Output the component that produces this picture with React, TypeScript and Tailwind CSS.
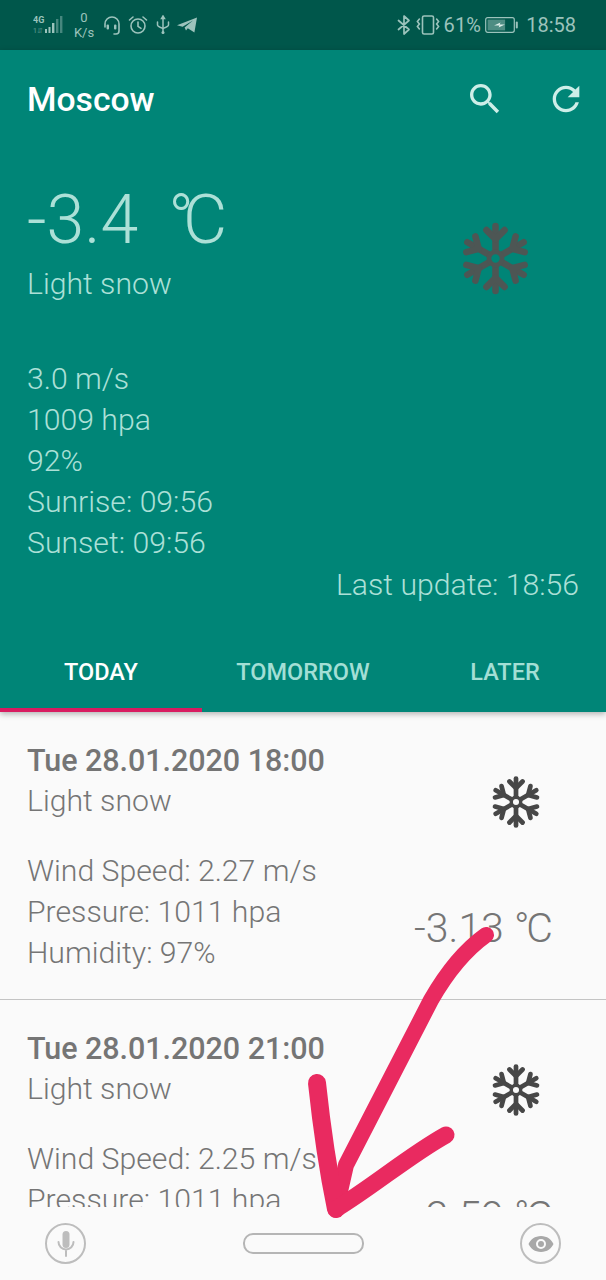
import React from "react";

function Flake({ size, color }: { size: number; color: string }) {
  return (
    <svg width={size} height={size} viewBox="0 0 24 24" fill="none" stroke={color} strokeWidth={2.1} strokeLinecap="round" strokeLinejoin="round">
      {[0, 60, 120, 180, 240, 300].map((a) => (
        <g key={a} transform={`rotate(${a} 12 12)`}>
          <path d="M12 9.4V1.6" />
          <path d="M9.1 2.9L12 5.8L14.9 2.9" />
        </g>
      ))}
      <circle cx="12" cy="12" r="2.1" strokeWidth={1.5} />
    </svg>
  );
}

function Forecast({ date, temp, wind, pressure, humidity }: { date: string; temp: string; wind: string; pressure: string; humidity: string }) {
  return (
    <div className="h-[288px] shrink-0 border-b border-[#c4c4c4] pl-[27px] pr-[56px] pt-[29px] flex justify-between">
      <div className="text-[#757575] text-[30.2px] leading-[41px] font-light whitespace-nowrap">
        <div className="font-medium text-[30.5px] leading-[39px] tracking-[-0.05px]">{date}</div>
        <div>Light snow</div>
        <div className="mt-[29px]">Wind Speed: {wind} m/s</div>
        <div>Pressure: {pressure} hpa</div>
        <div>Humidity: {humidity}%</div>
      </div>
      <div className="flex flex-col items-end pt-[34px]">
        <div className="mr-[7px] h-[54px]">
          <Flake size={54} color="#474747" />
        </div>
        <div className="mt-[75px] text-[#757575] text-[41px] leading-[48px] font-light whitespace-pre">
          {temp} <span className="tracking-[-3px]">°C</span>
        </div>
      </div>
    </div>
  );
}

function StatusBar() {
  const c = "#9cc3bc";
  return (
    <div className="h-[50px] shrink-0 bg-[#00574b] flex items-center justify-between pl-[33px] pr-[30px] text-[#9cc3bc]">
      <div className="flex items-center">
        <svg width="31" height="20" viewBox="0 0 31 20" fill={c}>
          <text x="0" y="8" fontSize="9" fontWeight="700" fontFamily="Roboto, sans-serif">4G</text>
          <text x="0" y="18" fontSize="7" fontWeight="500" opacity="0.5" fontFamily="Roboto, sans-serif">1⇵</text>
          <rect x="12" y="14" width="2" height="4" />
          <rect x="15.5" y="12" width="2" height="6" />
          <rect x="19" y="8" width="2.4" height="10" />
          <rect x="23" y="4" width="2.4" height="14" opacity="0.45" />
          <rect x="27" y="1" width="2.4" height="17" opacity="0.45" />
        </svg>
        <div className="ml-[9px] w-[22px] flex flex-col items-center text-[13px] leading-[15px] -mt-[1px]">
          <span>0</span>
          <span>K/s</span>
        </div>
        <svg className="ml-[8px]" width="18" height="20" viewBox="0 0 18 20" fill="none" stroke={c} strokeWidth="1.6" strokeLinecap="round">
          <path d="M2 12V9a7 7 0 0 1 14 0v7c0 2-1.4 3-3 3h-2" />
          <rect x="3.6" y="9.5" width="2.4" height="5" rx="1" fill={c} stroke="none" />
          <rect x="11" y="9.5" width="2.4" height="5" rx="1" fill={c} stroke="none" />
        </svg>
        <svg className="ml-[7px]" width="20" height="20" viewBox="0 0 20 20" fill="none" stroke={c} strokeWidth="1.6" strokeLinecap="round">
          <circle cx="10" cy="11" r="7" />
          <path d="M10 7v4.4l3 2" />
          <path d="M1.5 5L5 2M18.5 5L15 2" />
        </svg>
        <svg className="ml-[8px]" width="14" height="20" viewBox="0 0 14 20" fill="none" stroke={c} strokeWidth="1.5" strokeLinecap="round">
          <path d="M7 3v15" />
          <path d="M1.5 7v3c0 1.5 1.5 2 5.5 3.5c4-1.5 5.5-2 5.5-3.5V7" />
          <path d="M5.5 3.6L7 1l1.5 2.6z" fill={c} />
          <circle cx="7" cy="17.6" r="1.5" fill={c} stroke="none" />
        </svg>
        <svg className="ml-[7px]" width="20" height="18" viewBox="0 0 20 18" fill={c}>
          <path d="M0 9.2L20 1.4L17.4 16.6L10.8 12.2L9 14.4L7.6 11.6L16 4.6L5.6 10.8z" />
        </svg>
      </div>
      <div className="flex items-center text-[20px] leading-[24px]">
        <svg width="14" height="22" viewBox="0 0 14 22" fill="none" stroke={c} strokeWidth="1.7" strokeLinecap="round" strokeLinejoin="round">
          <path d="M1.5 6.5L12 15.5L7 20V2L12 6.5L1.5 15.5" />
        </svg>
        <svg className="ml-[4px]" width="26" height="22" viewBox="0 0 26 22" fill="none" stroke={c} strokeWidth="1.6" strokeLinecap="round">
          <rect x="7.5" y="2" width="11" height="18" rx="1.6" />
          <path d="M4.4 5L2.4 7.5L4.4 10L2.4 12.5L4.4 15" />
          <path d="M21.6 5L23.6 7.5L21.6 10L23.6 12.5L21.6 15" />
        </svg>
        <span className="ml-[2px] tracking-[0.2px]">61%</span>
        <svg className="ml-[4px]" width="33" height="16" viewBox="0 0 33 16" fill="none">
          <rect x="0.7" y="0.7" width="28.6" height="14.6" rx="2" stroke={c} strokeWidth="1.2" />
          <rect x="2.6" y="2.6" width="17.5" height="10.8" fill={c} opacity="0.5" />
          <path d="M9 8.6L15.5 5.5L14.6 7.5L20 7.4L13.6 10.6L14.4 8.6z" fill="#dceee9" />
          <rect x="30.8" y="4.6" width="2" height="7" rx="1" fill={c} />
        </svg>
        <span className="ml-[8px]">18:58</span>
      </div>
    </div>
  );
}

export default function App() {
  return (
    <div className="w-[606px] h-[1280px] relative overflow-hidden bg-[#fafafa] flex flex-col font-['Roboto',sans-serif]">
      <StatusBar />

      <div className="shrink-0 bg-[#008577] text-[#ace0d7] font-light relative z-10 shadow-[0_2px_6px_rgba(0,0,0,0.3)]">
        <div className="h-[98px] flex items-center justify-between pl-[27px] pr-[20px]">
          <div className="mt-[2px] text-white text-[33.7px] font-medium leading-none">Moscow</div>
          <div className="flex items-center gap-[41px]">
            <svg width="40" height="40" viewBox="0 0 24 24" fill="#cdeee8">
              <path d="M15.5 14h-.79l-.28-.27C15.41 12.59 16 11.11 16 9.5 16 5.91 13.09 3 9.5 3S3 5.91 3 9.5 5.91 16 9.5 16c1.61 0 3.09-.59 4.23-1.57l.27.28v.79l5 4.99L20.49 19l-4.99-5zm-6 0C7.01 14 5 11.99 5 9.5S7.01 5 9.5 5 14 7.01 14 9.5 11.99 14 9.5 14z" />
            </svg>
            <svg width="40" height="40" viewBox="0 0 24 24" fill="#cdeee8">
              <path d="M17.65 6.35C16.2 4.9 14.21 4 12 4c-4.42 0-7.99 3.58-7.99 8s3.57 8 7.99 8c3.73 0 6.84-2.55 7.73-6h-2.08c-.82 2.33-3.04 4-5.65 4-3.31 0-6-2.69-6-6s2.69-6 6-6c1.66 0 3.14.69 4.22 1.78L13 11h7V4l-2.35 2.35z" />
            </svg>
          </div>
        </div>

        <div className="mt-[32px] pl-[27px] pr-[73px] flex items-center justify-between">
          <div>
            <div className="text-[68px] leading-[80px] font-light whitespace-pre">
              -3.4{"  "}
              <span className="-ml-[3px] tracking-[-11px]">°C</span>
            </div>
            <div className="mt-[3px] text-[30.2px] leading-[41px]">Light snow</div>
          </div>
          <div className="h-[75px] mt-[32px]">
            <Flake size={75} color="#4d5654" />
          </div>
        </div>

        <div className="mt-[54px] pl-[27px] text-[30.2px] leading-[41px]">
          <div>3.0 m/s</div>
          <div>1009 hpa</div>
          <div>92%</div>
          <div>Sunrise: 09:56</div>
          <div>Sunset: 09:56</div>
        </div>

        <div className="mt-[1px] pr-[27px] text-right text-[30.2px] leading-[41px]">Last update: 18:56</div>

        <div className="mt-[35px] h-[72px] grid grid-cols-3 text-[23.5px] font-medium text-[#a3dfd5]">
          <div className="flex justify-center pt-[16px] leading-[32px] text-white border-b-4 border-[#d81b60]">TODAY</div>
          <div className="flex justify-center pt-[16px] leading-[32px]">TOMORROW</div>
          <div className="flex justify-center pt-[16px] leading-[32px]">LATER</div>
        </div>
      </div>

      <div className="flex-1 min-h-0 overflow-hidden flex flex-col">
        <Forecast date="Tue 28.01.2020 18:00" temp="-3.13" wind="2.27" pressure="1011" humidity="97" />
        <Forecast date="Tue 28.01.2020 21:00" temp="-2.59" wind="2.25" pressure="1011" humidity="97" />
      </div>

      <div className="h-[73px] shrink-0 bg-[#fafafa] relative z-10 flex items-center justify-between pl-[45px] pr-[45px]">
        <div className="w-[41px] h-[41px] rounded-full border-2 border-[#bdbdbd] flex items-center justify-center">
          <svg width="26" height="30" viewBox="0 0 26 30" fill="none" stroke="#bdbdbd" strokeWidth="2" strokeLinecap="round">
            <rect x="9.5" y="2" width="7" height="17" rx="3.5" fill="#bdbdbd" stroke="none" />
            <path d="M5.5 13a7.5 7.5 0 0 0 15 0M13 21v6" />
          </svg>
        </div>
        <div className="w-[121px] h-[21px] rounded-[10px] border-2 border-[#b5b5b5]" />
        <div className="w-[41px] h-[41px] rounded-full border-2 border-[#bdbdbd] flex items-center justify-center">
          <svg width="28" height="20" viewBox="0 0 28 20" fill="#a8a8a8">
            <path fillRule="evenodd" d="M14 2C8 2 3.4 5.6 1.5 10c1.9 4.4 6.5 8 12.5 8s10.6-3.6 12.5-8C24.6 5.6 20 2 14 2zm0 13a5 5 0 1 1 0-10a5 5 0 0 1 0 10z" />
            <circle cx="14" cy="10" r="3" />
          </svg>
        </div>
      </div>

      <svg className="absolute inset-0 z-20 pointer-events-none" width="606" height="1280" viewBox="0 0 606 1280" fill="none" stroke="#e92a60" strokeWidth="17" strokeLinecap="round" strokeLinejoin="round">
        <path d="M486 935C465 950 447 972 431 1000L346 1165L336 1209" strokeWidth="16" />
        <path d="M317 1083C322 1130 328 1170 336 1209" strokeWidth="18" />
        <path d="M446 1135C410 1155 375 1185 336 1209" strokeWidth="17" />
      </svg>
    </div>
  );
}
